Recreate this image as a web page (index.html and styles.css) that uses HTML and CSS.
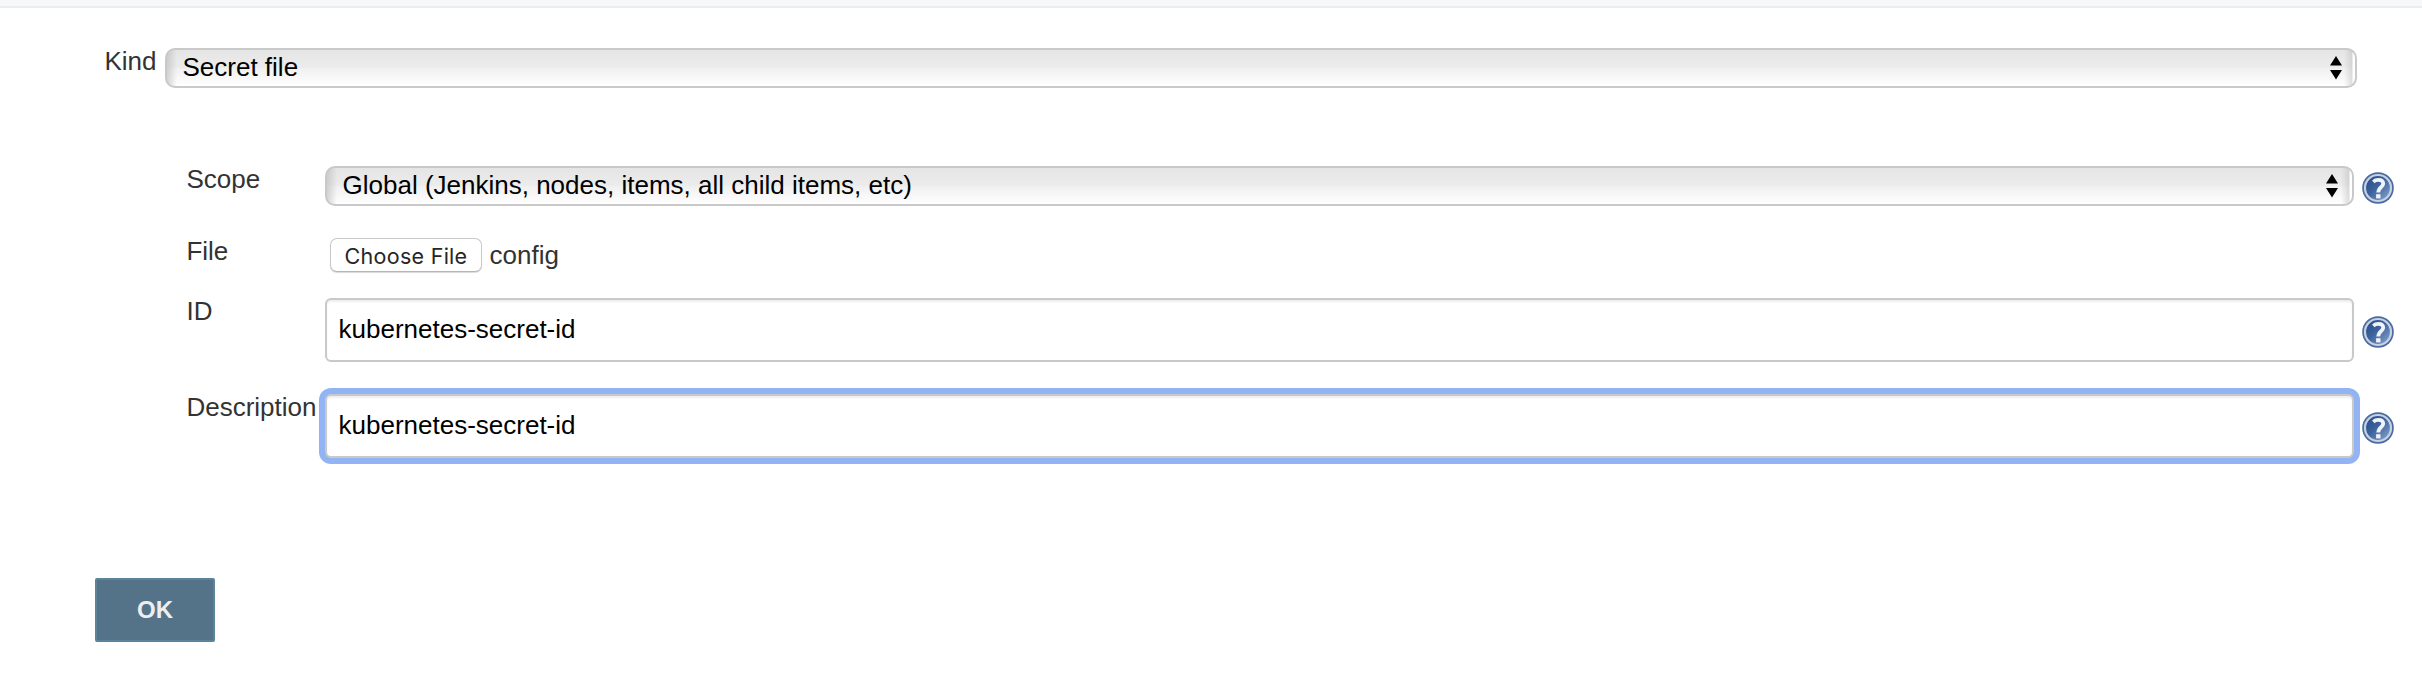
FILE: index.html
```
<!DOCTYPE html>
<html lang="en">
<head>
<meta charset="utf-8">
<title>Add Credentials</title>
<link rel="stylesheet" href="styles.css">
</head>
<body>
<svg class="defs" width="0" height="0" aria-hidden="true">
  <defs>
    <linearGradient id="blue" x1="0" y1="0" x2="1" y2="1">
      <stop offset="0" stop-color="#234a8a"/>
      <stop offset="0.45" stop-color="#3d629c"/>
      <stop offset="1" stop-color="#8fabd0"/>
    </linearGradient>
    <symbol id="help" viewBox="0 0 32 32">
      <circle cx="16" cy="16" r="15.8" fill="#4a6ba1"/>
      <circle cx="16" cy="16" r="13" fill="url(#blue)" stroke="#c6d2e4" stroke-width="2.2"/>
      <path d="M11.3 9.8C12.8 8.4 14.5 7.9 16.4 7.9C19.6 7.9 21.2 9.6 21.2 11.7C21.2 15.2 16.3 15.3 16.3 20.4" fill="none" stroke="#f0f3f9" stroke-width="3.8"/>
      <rect x="14.1" y="22.2" width="4.4" height="4.2" fill="#f0f3f9"/>
    </symbol>
    <symbol id="arrows" viewBox="0 0 12 24">
      <path d="M6 0L12 9.5H0ZM0 14H12L6 23.5Z" fill="#000"/>
    </symbol>
  </defs>
</svg>
<div class="topbar"></div>
<main class="form">
  <div class="kind-row">
    <div class="label">Kind</div>
    <div class="select"><span>Secret file</span><svg class="arrows"><use href="#arrows"/></svg></div>
  </div>
  <div class="fields">
    <div class="row scope">
      <div class="label">Scope</div>
      <div class="select"><span>Global (Jenkins, nodes, items, all child items, etc)</span><svg class="arrows"><use href="#arrows"/></svg></div>
      <svg class="help"><use href="#help"/></svg>
    </div>
    <div class="row file">
      <div class="label">File</div>
      <div class="picker"><button class="choose" type="button">Choose File</button><span class="filename">config</span></div>
    </div>
    <div class="row text-row">
      <div class="label">ID</div>
      <input class="input" type="text" value="kubernetes-secret-id">
      <svg class="help"><use href="#help"/></svg>
    </div>
    <div class="row text-row">
      <div class="label">Description</div>
      <input class="input focused" type="text" value="kubernetes-secret-id">
      <svg class="help"><use href="#help"/></svg>
    </div>
  </div>
  <button class="ok" type="button">OK</button>
</main>
</body>
</html>
```
FILE: styles.css
```
* { box-sizing: border-box; }
body {
  margin: 0;
  background: #fff;
  color: #333;
  font: 26px/30px "Liberation Sans", Arial, sans-serif;
}
.defs { display: block; }
.topbar {
  height: 8px;
  background: #f8f8f8;
  border-bottom: 2px solid #e9eef2;
}
.form { padding: 40px 0 0 95px; }
.kind-row {
  display: grid;
  grid-template-columns: 60px 2192px;
  padding-left: 10px;
  height: 118px;
  align-items: start;
}
.label { margin: -2px 0 0 -0.6px; white-space: nowrap; }
.select {
  display: flex;
  justify-content: space-between;
  align-items: flex-start;
  height: 40px;
  padding: 2px 13px 0 15.5px;
  border: 2px solid #c9c9c9;
  border-radius: 10px;
  color: #000;
  background:
    linear-gradient(to right, rgba(180,180,180,.55), rgba(220,220,220,0)) left / 10px 100% no-repeat,
    linear-gradient(to left, #fff 2px, rgba(190,190,190,.5) 3px, rgba(220,220,220,0) 11px) right / 11px 100% no-repeat,
    linear-gradient(#e5e5e5, #ececec 50%, #f0f0f0 51%, #fff);
}
.arrows { width: 12px; height: 24px; margin-top: 4px; }
.fields { padding-left: 92px; height: 412px; }
.row {
  display: grid;
  grid-template-columns: 138px 2029px 40px;
  align-items: start;
}
.help { width: 32px; height: 32px; margin-left: 8px; }
.scope { height: 72px; }
.scope .help { margin-top: 6px; }
.scope .select { padding-right: 14px; }
.file { height: 60px; }
.picker { display: flex; align-items: flex-start; padding-left: 5px; }
.choose {
  width: 152px;
  height: 34px;
  padding: 2px 0 0;
  border: 1px solid #c8c8c8;
  border-bottom-color: #b5b5b5;
  border-radius: 7px;
  background: #fff;
  box-shadow: 0 1px 1px rgba(0,0,0,.15);
  color: #262626;
  font: 21.5px/30px Inter, sans-serif;
  letter-spacing: .28px;
}
.filename { margin: 2px 0 0 7.5px; }
.text-row { height: 96px; }
.text-row .help { margin-top: 18px; }
.input {
  width: 100%;
  height: 64px;
  padding: 0 11.5px 2px;
  border: 2px solid #c9c9c9;
  border-radius: 6px;
  outline: 0;
  background: #fff;
  box-shadow: inset 0 2px 2px rgba(0,0,0,.07);
  color: #000;
  font: inherit;
}
.focused { box-shadow: 0 0 0 6px #92b4f4, inset 0 2px 2px rgba(0,0,0,.07); }
.ok {
  display: block;
  width: 120px;
  height: 64px;
  padding: 0;
  border: 2px solid #5b849b;
  border-radius: 2px;
  background: #547388;
  color: #eee;
  font: bold 24px/28px "Liberation Sans", Arial, sans-serif;
}
```
